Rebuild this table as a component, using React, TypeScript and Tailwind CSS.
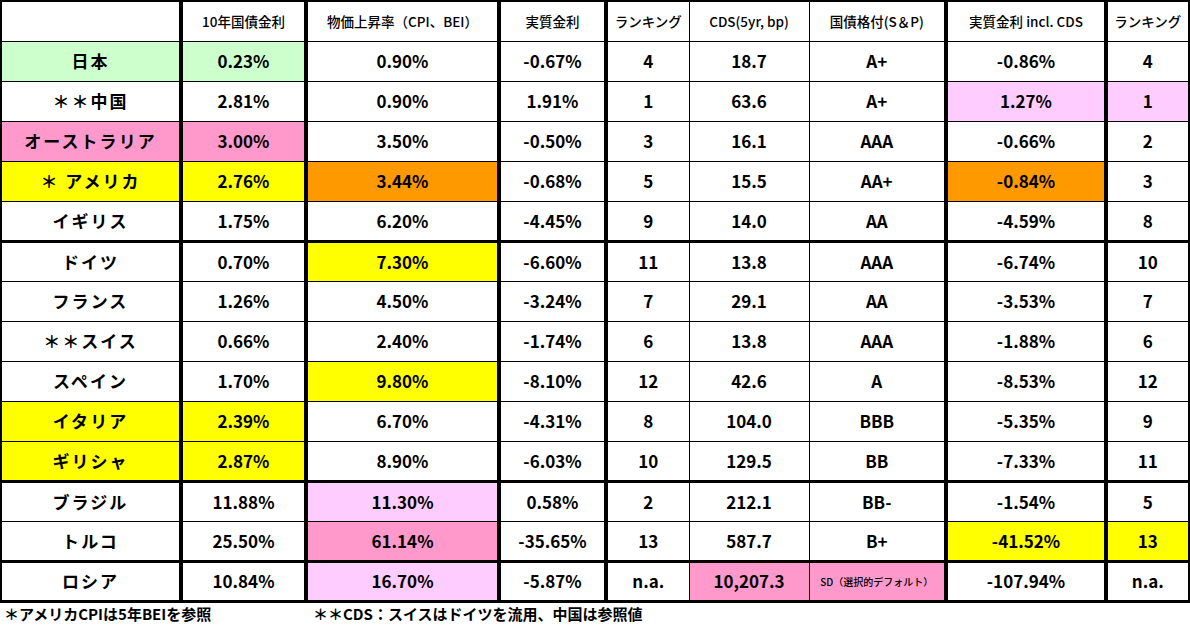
import React from 'react'

const G = 'bg-[#ccffcc]'
const P = 'bg-[#ff99cc]'
const LP = 'bg-[#ffccff]'
const Y = 'bg-[#ffff00]'
const O = 'bg-[#ff9900]'

type Cell = { v: string; bg?: string; small?: boolean }
type Row = { cells: Cell[]; thickTop?: boolean }

const c = (v: string, bg?: string, small?: boolean): Cell => ({ v, bg, small })

const headers = [
  '',
  '10年国債金利',
  '物価上昇率（CPI、BEI）',
  '実質金利',
  'ランキング',
  'CDS(5yr, bp)',
  '国債格付(S＆P)',
  '実質金利 incl. CDS',
  'ランキング',
]

const rows: Row[] = [
  { cells: [c('日本', G), c('0.23%', G), c('0.90%'), c('-0.67%'), c('4'), c('18.7'), c('A+'), c('-0.86%'), c('4')] },
  { cells: [c('＊＊中国'), c('2.81%'), c('0.90%'), c('1.91%'), c('1'), c('63.6'), c('A+'), c('1.27%', LP), c('1', LP)] },
  { cells: [c('オーストラリア', P), c('3.00%', P), c('3.50%'), c('-0.50%'), c('3'), c('16.1'), c('AAA'), c('-0.66%'), c('2')] },
  { cells: [c('＊ アメリカ', Y), c('2.76%', Y), c('3.44%', O), c('-0.68%'), c('5'), c('15.5'), c('AA+'), c('-0.84%', O), c('3')] },
  { cells: [c('イギリス'), c('1.75%'), c('6.20%'), c('-4.45%'), c('9'), c('14.0'), c('AA'), c('-4.59%'), c('8')] },
  { thickTop: true, cells: [c('ドイツ'), c('0.70%'), c('7.30%', Y), c('-6.60%'), c('11'), c('13.8'), c('AAA'), c('-6.74%'), c('10')] },
  { cells: [c('フランス'), c('1.26%'), c('4.50%'), c('-3.24%'), c('7'), c('29.1'), c('AA'), c('-3.53%'), c('7')] },
  { cells: [c('＊＊スイス'), c('0.66%'), c('2.40%'), c('-1.74%'), c('6'), c('13.8'), c('AAA'), c('-1.88%'), c('6')] },
  { cells: [c('スペイン'), c('1.70%'), c('9.80%', Y), c('-8.10%'), c('12'), c('42.6'), c('A'), c('-8.53%'), c('12')] },
  { cells: [c('イタリア', Y), c('2.39%', Y), c('6.70%'), c('-4.31%'), c('8'), c('104.0'), c('BBB'), c('-5.35%'), c('9')] },
  { cells: [c('ギリシャ', Y), c('2.87%', Y), c('8.90%'), c('-6.03%'), c('10'), c('129.5'), c('BB'), c('-7.33%'), c('11')] },
  { thickTop: true, cells: [c('ブラジル'), c('11.88%'), c('11.30%', LP), c('0.58%'), c('2'), c('212.1'), c('BB-'), c('-1.54%'), c('5')] },
  { cells: [c('トルコ'), c('25.50%'), c('61.14%', P), c('-35.65%'), c('13'), c('587.7'), c('B+'), c('-41.52%', Y), c('13', Y)] },
  { thickTop: true, cells: [c('ロシア'), c('10.84%'), c('16.70%', LP), c('-5.87%'), c('n.a.'), c('10,207.3', P), c('SD（選択的デフォルト）', P, true), c('-107.94%'), c('n.a.')] },
]

// right border per column: double after most columns, single after 4 and 5
const rightBorder = [
  'border-r-[4px] border-r-black border-r-double',
  'border-r-[4px] border-r-black border-r-double',
  'border-r-[4px] border-r-black border-r-double',
  'border-r-[4px] border-r-black border-r-double',
  'border-r border-r-black',
  'border-r border-r-black',
  'border-r-[4px] border-r-black border-r-double',
  'border-r-[4px] border-r-black border-r-double',
  'border-r-[3px] border-r-black border-r-double',
]

const widths = ['w-[180px]', 'w-[125px]', 'w-[193px]', 'w-[107px]', 'w-[83px]', 'w-[120px]', 'w-[137px]', 'w-[160px]', 'w-[83px]']

export default function App() {
  return (
    <div
      className="w-[1190px] h-[625px] bg-white text-black overflow-hidden"
      style={{ fontFamily: '"Noto Sans CJK JP", "Noto Sans", sans-serif' }}
    >
      <table className="table-fixed border-collapse w-[1188px]">
        <colgroup>
          {widths.map((w, i) => (
            <col key={i} className={w} />
          ))}
        </colgroup>
        <thead>
          <tr className="h-[40px]">
            {headers.map((h, i) => (
              <th
                key={i}
                className={`border-t-2 border-t-black border-b border-b-black ${i === 0 ? 'border-l-2 border-l-black' : ''} ${rightBorder[i]} text-[13.5px] font-medium text-center whitespace-nowrap p-0`}
              >
                {h}
              </th>
            ))}
          </tr>
        </thead>
        <tbody>
          {rows.map((r, ri) => (
            <tr key={ri} className="h-[40px]">
              {r.cells.map((cell, ci) => (
                <td
                  key={ci}
                  className={[
                    'p-0 text-center font-bold whitespace-nowrap',
                    r.thickTop ? 'border-t-[3px] border-t-black' : 'border-t border-t-black',
                    ri === rows.length - 1 ? 'border-b-[3px] border-b-black' : 'border-b border-b-black',
                    ci === 0 ? 'border-l-2 border-l-black tracking-[0.12em]' : '',
                    rightBorder[ci],
                    cell.small ? 'text-[10px] font-medium' : 'text-[17px]',
                    cell.bg ?? '',
                  ].join(' ')}
                >
                  {cell.v}
                </td>
              ))}
            </tr>
          ))}
        </tbody>
      </table>
      <div className="flex items-center h-[24px] text-[15px] font-bold">
        <span className="w-[313px] pl-[4px]">＊アメリカCPIは5年BEIを参照</span>
        <span>＊＊CDS：スイスはドイツを流用、中国は参照値</span>
      </div>
    </div>
  )
}
